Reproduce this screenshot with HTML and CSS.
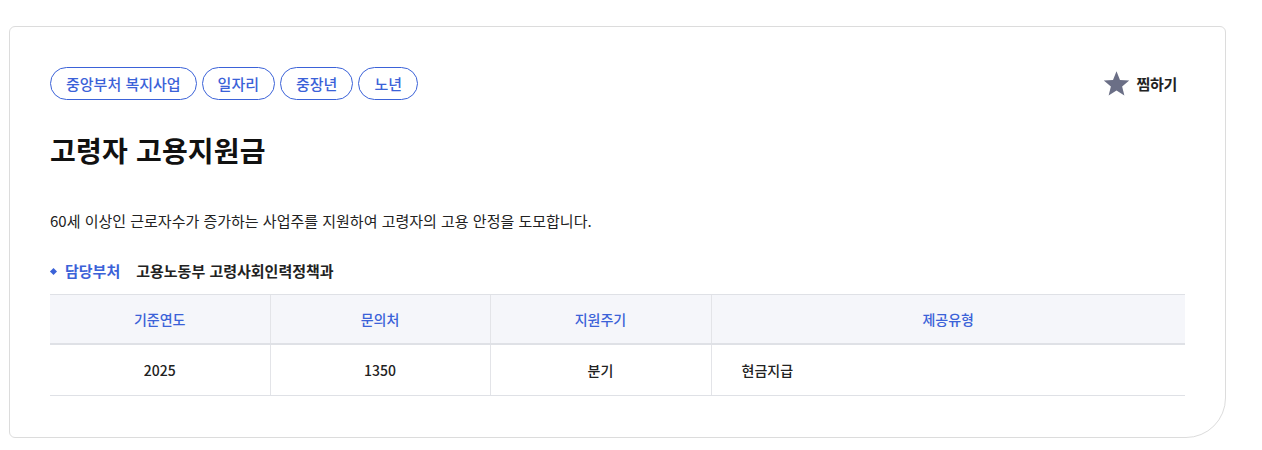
FILE: index.html
```html
<!DOCTYPE html>
<html lang="ko">
<head>
<meta charset="utf-8">
<link rel="stylesheet" href="styles.css">
</head>
<body>
<div class="page">
  <section class="card">
    <div class="top">
      <ul class="tags">
        <li class="tag">중앙부처 복지사업</li>
        <li class="tag">일자리</li>
        <li class="tag">중장년</li>
        <li class="tag">노년</li>
      </ul>
      <button class="fav" type="button">
        <svg class="star" viewBox="0 0 24 24" width="27" height="27" aria-hidden="true"><path d="M12 1.2l3.1 7.6 8.2.6-6.3 5.3 2 8-7-4.4-7 4.4 2-8L.7 9.4l8.2-.6z" fill="#6b6f86"/></svg>
        <span>찜하기</span>
      </button>
    </div>
    <h1 class="title">고령자 고용지원금</h1>
    <p class="desc">60세 이상인 근로자수가 증가하는 사업주를 지원하여 고령자의 고용 안정을 도모합니다.</p>
    <div class="dept">
      <span class="dept-label">담당부처</span>
      <span class="dept-value">고용노동부 고령사회인력정책과</span>
    </div>
    <table class="info">
      <colgroup>
        <col class="c1"><col class="c2"><col class="c3"><col class="c4">
      </colgroup>
      <thead>
        <tr><th>기준연도</th><th>문의처</th><th>지원주기</th><th>제공유형</th></tr>
      </thead>
      <tbody>
        <tr><td>2025</td><td>1350</td><td>분기</td><td class="left">현금지급</td></tr>
      </tbody>
    </table>
  </section>
</div>
</body>
</html>
```
FILE: styles.css
```css
* { box-sizing: border-box; }
html, body { margin: 0; padding: 0; background: #fff; }
body {
  font-family: "Noto Sans CJK KR", "Noto Sans", sans-serif;
  color: #222;
}
.page { padding: 26px 0 0 9px; }
.card {
  width: 1217px;
  height: 412px;
  border: 1px solid #dcdcdc;
  border-radius: 6px 6px 40px 6px;
  padding: 40px 40px 0 40px;
}
.top {
  display: flex;
  justify-content: space-between;
  align-items: center;
}
.tags {
  list-style: none;
  margin: 0;
  padding: 0;
  display: flex;
  gap: 5px;
}
.tag {
  height: 33px;
  padding: 0 15px;
  border: 1px solid #3b62d8;
  border-radius: 17px;
  color: #3b62d8;
  font-size: 15px;
  font-weight: 500;
  display: flex;
  align-items: center;
}
.fav {
  display: flex;
  align-items: center;
  gap: 6px;
  border: 0;
  background: none;
  padding: 0;
  margin-right: 8px;
  font-family: inherit;
  font-size: 15px;
  font-weight: 700;
  color: #222;
  letter-spacing: -0.3px;
}
.title {
  margin: 32px 0 0;
  font-size: 28px;
  font-weight: 700;
  color: #111;
  line-height: 36px;
  letter-spacing: 0.2px;
}
.desc {
  margin: 42px 0 0;
  font-size: 15px;
  line-height: 22px;
  color: #222;
}
.dept {
  margin-top: 28px;
  display: flex;
  align-items: center;
  font-size: 15px;
  font-weight: 700;
  line-height: 22px;
}
.dept-label {
  color: #3b62d8;
  display: flex;
  align-items: center;
  padding-left: 15px;
  position: relative;
}
.dept-label::before {
  content: "";
  position: absolute;
  left: 1px;
  top: 50%;
  width: 5px;
  height: 5px;
  margin-top: -2px;
  background: #3b62d8;
  transform: rotate(45deg);
}
.dept-value { margin-left: 16px; color: #222; }
.info {
  width: 1135px;
  margin-top: 12px;
  border-collapse: collapse;
  font-size: 14px;
}
.c1, .c2 { width: 220px; }
.c3 { width: 221px; }
.info th {
  height: 49px;
  background: #f5f6fa;
  color: #3b62d8;
  font-weight: 500;
  border-top: 1px solid #dfe1e6;
  border-bottom: 2px solid #dfe1e6;
  border-left: 1px solid #e3e4e8;
  text-align: center;
  padding: 0;
}
.info td {
  height: 52px;
  text-align: center;
  font-weight: 500;
  color: #222;
  border-bottom: 1px solid #dfe1e6;
  border-left: 1px solid #e3e4e8;
  padding: 0;
}
.info th:first-child, .info td:first-child { border-left: 0; }
.info td.left { text-align: left; padding-left: 30px; }
```
